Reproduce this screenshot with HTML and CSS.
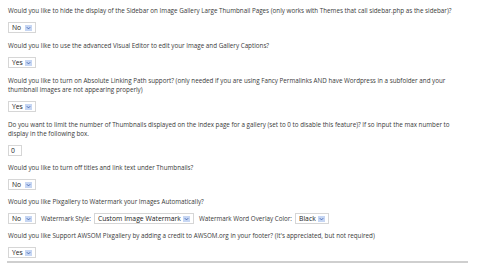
FILE: index.html
```html
<!DOCTYPE html>
<html>
<head>
<meta charset="utf-8">
<link rel="stylesheet" href="styles.css">
</head>
<body>
<div class="opts">
  <p class="q">Would you like to hide the display of the Sidebar on Image Gallery Large Thumbnail Pages (only works with Themes that call sidebar.php as the sidebar)?</p>
  <div class="row"><span class="sel"><span class="val yn">No</span><span class="arr"><svg viewBox="0 0 6 6"><path d="M1.3 2.2 L3 3.9 L4.7 2.2"/></svg></span></span></div>

  <p class="q">Would you like to use the advanced Visual Editor to edit your Image and Gallery Captions?</p>
  <div class="row"><span class="sel"><span class="val yn">Yes</span><span class="arr"><svg viewBox="0 0 6 6"><path d="M1.3 2.2 L3 3.9 L4.7 2.2"/></svg></span></span></div>

  <p class="q">Would you like to turn on Absolute Linking Path support? (only needed if you are using Fancy Permalinks AND have Wordpress in a subfolder and your thumbnail images are not appearing properly)</p>
  <div class="row"><span class="sel"><span class="val yn">Yes</span><span class="arr"><svg viewBox="0 0 6 6"><path d="M1.3 2.2 L3 3.9 L4.7 2.2"/></svg></span></span></div>

  <p class="q">Do you want to limit the number of Thumbnails displayed on the index page for a gallery (set to 0 to disable this feature)? If so input the max number to display in the following box.</p>
  <div class="row"><span class="inp">0</span></div>

  <p class="q">Would you like to turn off titles and link text under Thumbnails?</p>
  <div class="row"><span class="sel"><span class="val yn">No</span><span class="arr"><svg viewBox="0 0 6 6"><path d="M1.3 2.2 L3 3.9 L4.7 2.2"/></svg></span></span></div>

  <p class="q">Would you like Pixgallery to Watermark your Images Automatically?</p>
  <div class="row">
    <span class="sel"><span class="val yn">No</span><span class="arr"><svg viewBox="0 0 6 6"><path d="M1.3 2.2 L3 3.9 L4.7 2.2"/></svg></span></span>
    <span class="lbl">Watermark Style:</span>
    <span class="sel"><span class="val">Custom Image Watermark</span><span class="arr"><svg viewBox="0 0 6 6"><path d="M1.3 2.2 L3 3.9 L4.7 2.2"/></svg></span></span>
    <span class="lbl">Watermark Word Overlay Color:</span>
    <span class="sel"><span class="val">Black</span><span class="arr"><svg viewBox="0 0 6 6"><path d="M1.3 2.2 L3 3.9 L4.7 2.2"/></svg></span></span>
  </div>

  <p class="q">Would you like Support AWSOM Pixgallery by adding a credit to AWSOM.org in your footer? (It's appreciated, but not required)</p>
  <div class="row last"><span class="sel"><span class="val yn">Yes</span><span class="arr"><svg viewBox="0 0 6 6"><path d="M1.3 2.2 L3 3.9 L4.7 2.2"/></svg></span></span></div>
</div>
<hr class="rule">
</body>
</html>
```
FILE: styles.css
```css
html, body { margin: 0; padding: 0; background: #fff; }
body {
  font-family: "Open Sans", "Liberation Sans", sans-serif;
  font-size: 6.27px;
  color: #3a3a3a;
}
.opts { padding: 6px 0 0 8px; width: 460px; }
.q { margin: 0; line-height: 9px; }
.row {
  display: flex;
  align-items: center;
  margin: 7px 0 8px 0;
  height: 11px;
}
.row:nth-of-type(n+4) { margin-top: 7px; margin-bottom: 7px; }
.row.last { margin-bottom: 3px; }
.sel {
  display: inline-flex;
  align-items: center;
  height: 11px;
  box-sizing: border-box;
  border: 1px solid #d6d6d6;
  background: #fff;
  padding: 0 3px 0 3px;
  color: #222;
  font-size: 6.8px;
}
.val { padding-right: 2px; }
.val.yn { min-width: 11px; }
.arr {
  display: inline-flex;
  width: 7px;
  height: 6px;
  background: #c6d6f3;
}
.arr svg { width: 7px; height: 6px; display: block; }
.arr path { fill: none; stroke: #3f62b0; stroke-width: 0.9; }
.inp {
  display: inline-flex;
  align-items: center;
  width: 14px;
  height: 11px;
  box-sizing: border-box;
  border: 1px solid #d6d6d6;
  padding-left: 2px;
  color: #222;
  font-size: 6.8px;
}
.lbl { margin: 0 3px 0 5px; }
.rule {
  margin: 0 0 0 7px;
  border: 0;
  height: 2px;
  width: 461px;
  background: #cfcfcf;
}
```
